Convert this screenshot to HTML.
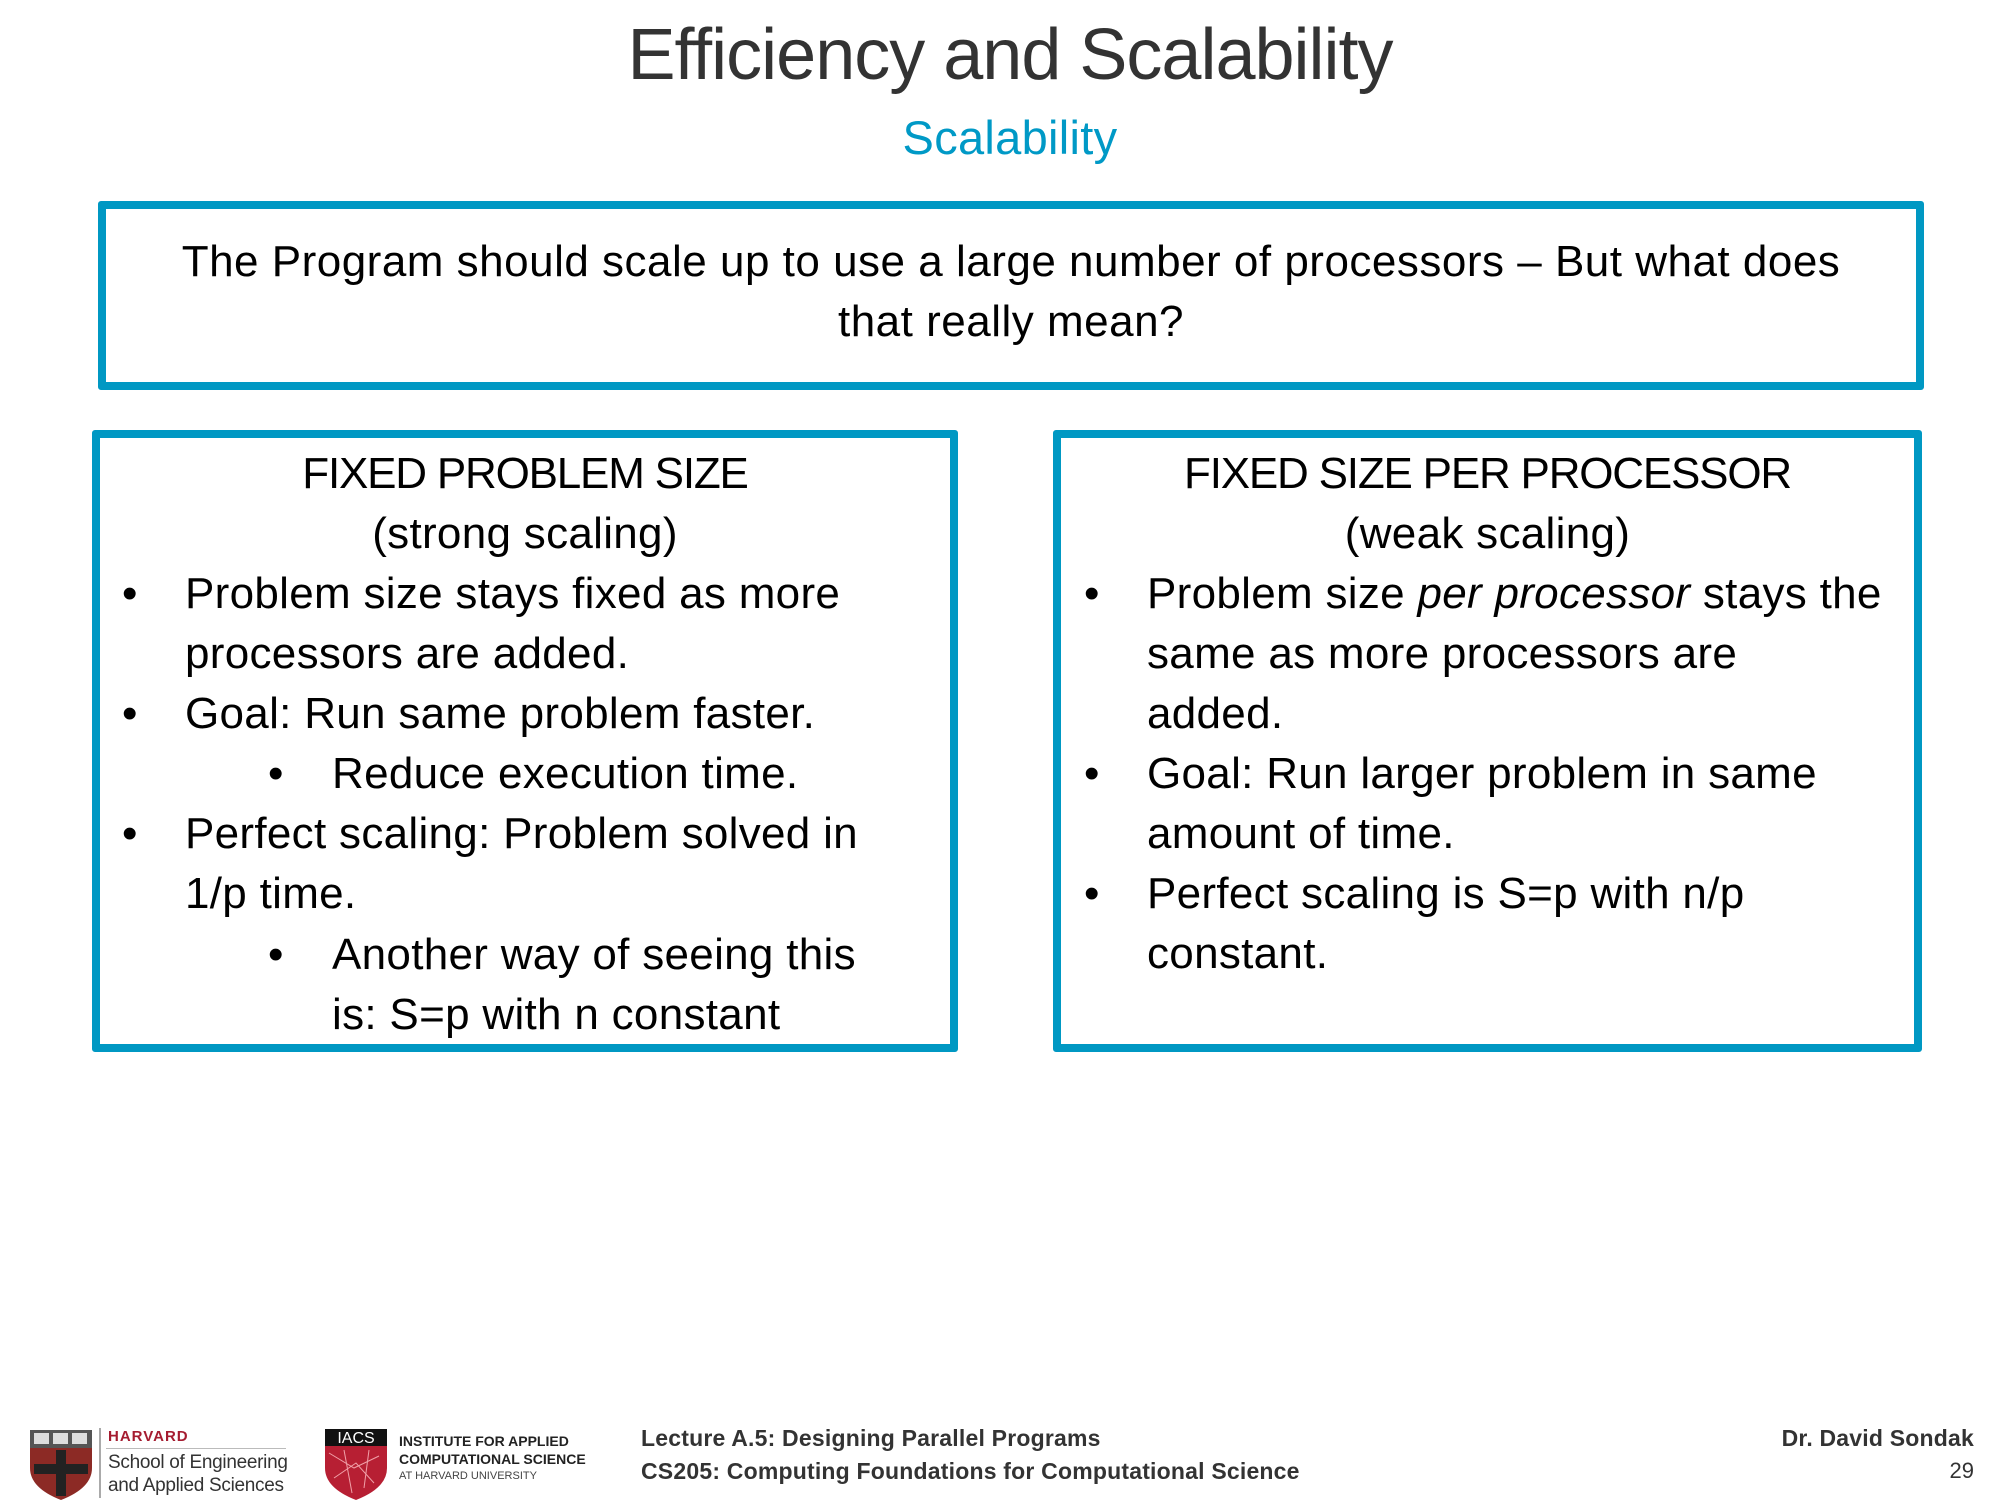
<!DOCTYPE html>
<html><head><meta charset="utf-8"><style>
body{margin:0;width:2000px;height:1500px;background:#fff;position:relative;overflow:hidden;font-family:"Liberation Sans",sans-serif;color:#000}
.a{position:absolute;white-space:nowrap}
.t{font-size:44px;letter-spacing:0.3px;line-height:60px}
.h{letter-spacing:-1.2px}
.box{position:absolute;border:8px solid #0098c3;box-sizing:border-box;border-radius:3px}
.f{font-weight:bold;font-size:23px;color:#333;letter-spacing:0.2px}
</style></head><body>
<div class="a" style="left:0;width:2020px;text-align:center;top:14px;font-size:72px;color:#333;letter-spacing:-1px">Efficiency and Scalability</div>
<div class="a" style="left:0;width:2020px;text-align:center;top:110px;font-size:47px;color:#0099c6;letter-spacing:0.3px">Scalability</div>

<div class="box" style="left:98px;top:201px;width:1826px;height:189px"></div>
<div class="a t" style="left:98px;width:1826px;text-align:center;top:232px;letter-spacing:0.5px">The Program should scale up to use a large number of processors – But what does<br>that really mean?</div>

<div class="box" style="left:92px;top:430px;width:866px;height:622px"></div>
<div class="box" style="left:1053px;top:430px;width:869px;height:622px"></div>

<div class="a t h" style="left:92px;width:866px;text-align:center;top:444px">FIXED PROBLEM SIZE<br><span style="letter-spacing:0.3px">(strong scaling)</span></div>
<div class="a t" style="left:122px;top:564px">•</div><div class="a t" style="left:185px;top:564px">Problem size stays fixed as more<br>processors are added.</div>
<div class="a t" style="left:122px;top:684px">•</div><div class="a t" style="left:185px;top:684px">Goal: Run same problem faster.</div>
<div class="a t" style="left:268px;top:744px">•</div><div class="a t" style="left:332px;top:744px">Reduce execution time.</div>
<div class="a t" style="left:122px;top:804px">•</div><div class="a t" style="left:185px;top:804px">Perfect scaling: Problem solved in<br>1/p time.</div>
<div class="a t" style="left:268px;top:925px">•</div><div class="a t" style="left:332px;top:925px">Another way of seeing this<br>is: S=p with n constant</div>

<div class="a t h" style="left:1053px;width:869px;text-align:center;top:444px">FIXED SIZE PER PROCESSOR<br><span style="letter-spacing:0.3px">(weak scaling)</span></div>
<div class="a t" style="left:1084px;top:564px">•</div><div class="a t" style="left:1147px;top:564px">Problem size <i>per processor</i> stays the<br>same as more processors are<br>added.</div>
<div class="a t" style="left:1084px;top:744px">•</div><div class="a t" style="left:1147px;top:744px">Goal: Run larger problem in same<br>amount of time.</div>
<div class="a t" style="left:1084px;top:864px">•</div><div class="a t" style="left:1147px;top:864px">Perfect scaling is S=p with n/p<br>constant.</div>

<svg class="a" style="left:28px;top:1428px" width="66" height="72" viewBox="0 0 66 72">
<path d="M2 2H64V40Q64 60 33 72Q2 60 2 40Z" fill="#8c2a25"/>
<rect x="2" y="2" width="62" height="18" fill="#555"/>
<rect x="6" y="5" width="15" height="11" fill="#ddd"/><rect x="25" y="5" width="15" height="11" fill="#ddd"/><rect x="44" y="5" width="15" height="11" fill="#ddd"/>
<rect x="28" y="22" width="10" height="46" fill="#222"/><rect x="6" y="36" width="54" height="10" fill="#222"/>
</svg>
<div class="a" style="left:99px;top:1428px;width:2px;height:70px;background:#aaa"></div>
<div class="a" style="left:108px;top:1428px;font-size:15px;font-weight:bold;color:#a51c30;letter-spacing:1px">HARVARD</div>
<div class="a" style="left:106px;top:1448px;width:180px;height:1px;background:#bbb"></div>
<div class="a" style="left:108px;top:1451px;font-size:19px;color:#333;letter-spacing:-0.3px;line-height:23px">School of Engineering<br>and Applied Sciences</div>

<svg class="a" style="left:324px;top:1428px" width="64" height="72" viewBox="0 0 64 72">
<path d="M1 1H63V40Q63 60 32 72Q1 60 1 40Z" fill="#b71f33"/>
<rect x="1" y="1" width="62" height="17" fill="#111"/>
<text x="32" y="15" font-size="16" fill="#fff" text-anchor="middle" font-family="Liberation Sans">IACS</text>
<path d="M5 25L30 40L55 28M10 50L32 35L50 55M20 22L28 65M45 22L40 60" stroke="#f0a0a8" stroke-width="1" fill="none"/>
</svg>
<div class="a" style="left:399px;top:1432px;font-size:14px;font-weight:bold;color:#222;line-height:18px">INSTITUTE FOR APPLIED<br>COMPUTATIONAL SCIENCE</div>
<div class="a" style="left:399px;top:1470px;font-size:11px;color:#444">AT HARVARD UNIVERSITY</div>

<div class="a f" style="left:641px;top:1425px">Lecture A.5: Designing Parallel Programs</div>
<div class="a f" style="left:641px;top:1458px">CS205: Computing Foundations for Computational Science</div>
<div class="a f" style="right:26px;top:1425px">Dr. David Sondak</div>
<div class="a" style="right:26px;top:1458px;font-size:22px;color:#333">29</div>
</body></html>
